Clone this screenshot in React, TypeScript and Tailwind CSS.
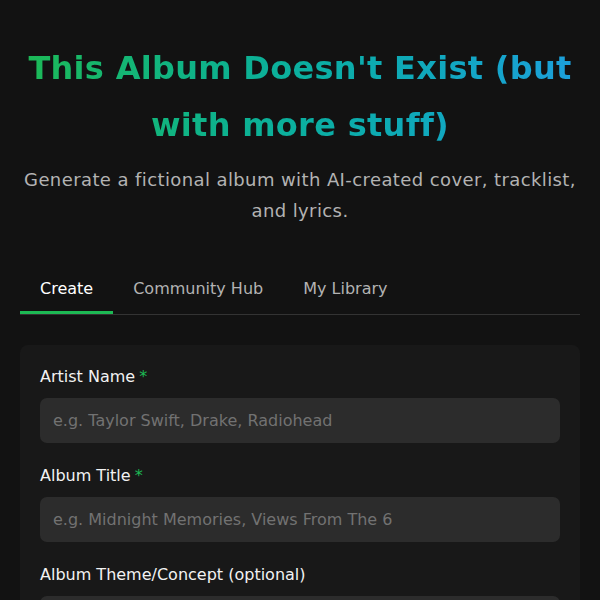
import { useState } from 'react';

const tabs = ['Create', 'Community Hub', 'My Library'];

function Field({ label, required, placeholder }: { label: string; required?: boolean; placeholder?: string }) {
  return (
    <div className="flex flex-col">
      <label className="mb-[9px] pt-px text-[16px] leading-[24px] text-[#f2f2f2]">
        {label}
        {required && <span className="ml-1 text-[#1db954]">*</span>}
      </label>
      <input
        className="h-[45px] w-full rounded-[7px] bg-[#2c2c2c] px-[13px] text-[16px] text-white outline-none placeholder:text-[#727272]"
        placeholder={placeholder}
      />
    </div>
  );
}

export default function App() {
  const [active, setActive] = useState(0);

  return (
    <div
      className="min-h-screen bg-[#121212] px-5 pt-[40px] text-white"
      style={{ fontFamily: "'DejaVu Sans', 'Open Sans', sans-serif" }}
    >
      {/* header */}
      <h1 className="bg-gradient-to-r from-[#1db954] to-[#1d9fdc] bg-clip-text text-center text-[32px] font-bold leading-[57px] tracking-[0.3px] text-transparent">
        This Album Doesn't Exist (but with more stuff)
      </h1>
      <p className="mx-auto mt-[10px] text-center text-[18px] leading-[31px] tracking-[0.4px] text-[#b3b3b3]">
        Generate a fictional album with AI-created cover, tracklist, and lyrics.
      </p>

      {/* tabs */}
      <div className="mt-[38px] flex border-b border-[#333333]">
        {tabs.map((t, i) => (
          <button
            key={t}
            onClick={() => setActive(i)}
            className={
              i === active
                ? 'border-b-[3px] border-[#1db954] px-5 pb-[10px] pt-[13px] text-[16px] leading-[24px] text-white'
                : 'border-b-[3px] border-transparent px-5 pb-[10px] pt-[13px] text-[16px] leading-[24px] text-[#b3b3b3]'
            }
          >
            {t}
          </button>
        ))}
      </div>

      {/* form card */}
      <div className="mt-[30px] flex flex-col gap-5 rounded-lg bg-[#181818] px-5 pb-5 pt-[19px]">
        <Field label="Artist Name" required placeholder="e.g. Taylor Swift, Drake, Radiohead" />
        <Field label="Album Title" required placeholder="e.g. Midnight Memories, Views From The 6" />
        <Field label="Album Theme/Concept (optional)" placeholder="" />
      </div>
    </div>
  );
}
